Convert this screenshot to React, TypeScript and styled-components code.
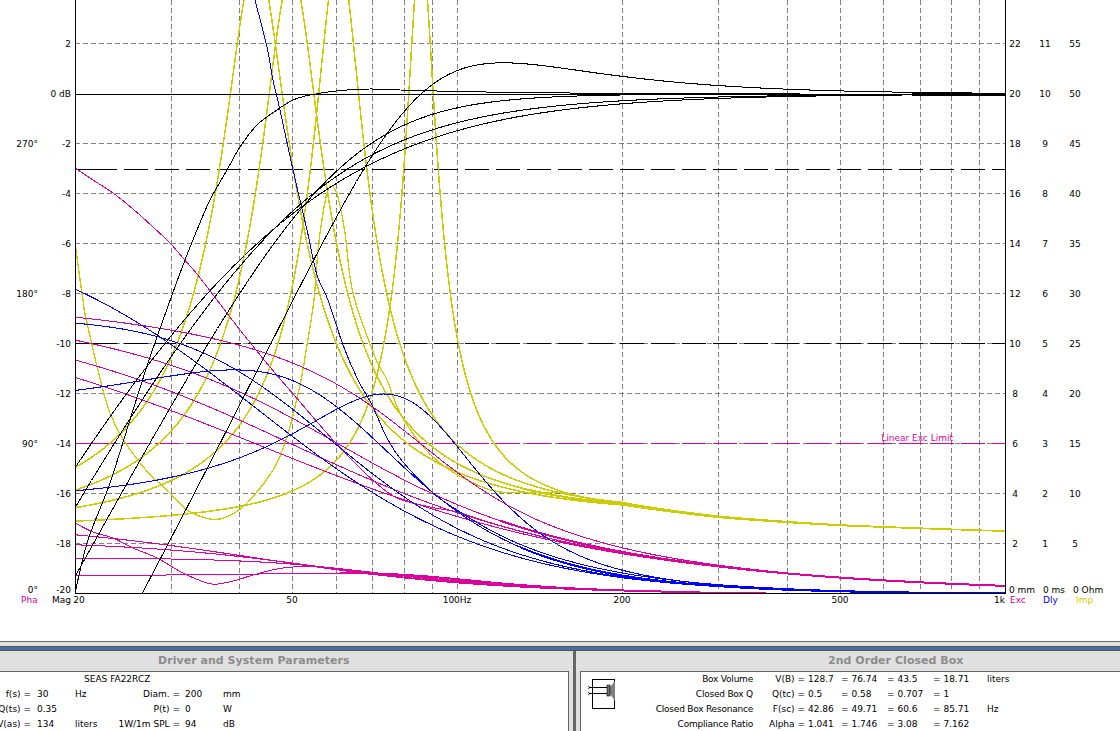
import React from "react";
import styled, { createGlobalStyle } from "styled-components";

const Global = createGlobalStyle`
  html, body { margin: 0; padding: 0; background: #fff; overflow: hidden; }
  #root { width: 1120px; height: 731px; overflow: hidden; }
`;

const MAGENTA = "#dc009c";
const YELLOW = "#cccc00";
const BLUE = "#0000ff";
const GREY = "#808080";

const Page = styled.div`
  width: 1120px;
  height: 731px;
  display: flex;
  flex-direction: column;
  overflow: hidden;
  background: #fff;
  font-family: "DejaVu Sans", Verdana, sans-serif;
  font-size: 9px;
  color: #000;
`;
const Chart = styled.svg`
  display: block;
  flex: 0 0 641px;
  width: 1120px;
  height: 641px;
`;
const Label = styled.text<{ $color?: string; $anchor?: string }>`
  font-family: "DejaVu Sans", Verdana, sans-serif;
  font-size: 9px;
  fill: ${(p) => p.$color || "#000"};
  text-anchor: ${(p) => p.$anchor || "middle"};
  dominant-baseline: central;
`;
const Curve = styled.path<{ $color: string; $w?: number }>`
  fill: none;
  stroke: ${(p) => p.$color};
  stroke-width: ${(p) => p.$w || 1};
  shape-rendering: crispEdges;
`;
const Rule = styled.line<{ $color: string; $dash?: string }>`
  stroke: ${(p) => p.$color};
  stroke-width: 1;
  stroke-dasharray: ${(p) => p.$dash || "none"};
  shape-rendering: crispEdges;
`;

const TopEdge = styled.div`
  flex: 0 0 5px;
  background: #e0e0e0;
  border-top: 1px solid #666;
  box-sizing: border-box;
`;
const BlueBar = styled.div`
  flex: 0 0 5px;
  box-sizing: border-box;
  background: #4a6ca4;
  border-top: 1px solid #555;
  border-bottom: 1px solid #555;
`;
const Panels = styled.div`
  flex: 1;
  display: flex;
  min-height: 0;
`;
const Panel = styled.section<{ $width: number }>`
  flex: 0 0 ${(p) => p.$width}px;
  width: ${(p) => p.$width}px;
  display: flex;
  flex-direction: column;
  background: #e0e0e0;
  overflow: hidden;
`;
const Divider = styled.div`
  flex: 0 0 3px;
  background: #666;
`;
const Title = styled.h2<{ $indent: number }>`
  margin: 0;
  flex: 0 0 20px;
  padding-left: ${(p) => p.$indent}px;
  font: bold 11px/20px "DejaVu Sans", Verdana, sans-serif;
  letter-spacing: 0.04px;
  color: #8c8c8c;
  white-space: nowrap;
`;
const DriverBody = styled.div`
  flex: 1;
  margin-right: 4px;
  background: #fff;
  border-top: 1px solid #666;
  border-right: 1px solid #666;
`;
const BoxBody = styled.div`
  flex: 1;
  margin-left: 4px;
  display: flex;
  background: #fff;
  border-top: 1px solid #666;
  border-left: 1px solid #666;
`;
const DriverName = styled.div`
  height: 15px;
  line-height: 14px;
  padding-left: 84px;
`;
const Grid = styled.div<{ $cols: string }>`
  display: grid;
  grid-template-columns: ${(p) => p.$cols};
  grid-auto-rows: 15px;
  line-height: 14px;
`;
const Cell = styled.div<{ $right?: boolean; $pad?: number }>`
  display: flex;
  white-space: nowrap;
  justify-content: ${(p) => (p.$right ? "flex-end" : "flex-start")};
  padding-left: ${(p) => p.$pad || 0}px;
`;
const BoxCaption = styled(Cell)`
  letter-spacing: -0.22px;
`;
const IconWrap = styled.svg`
  flex: 0 0 30px;
  width: 30px;
  height: 32px;
  margin: 6px 0 0 7px;
`;

const f2x = (f: number) => 75 + 547.4 * Math.log10(f / 20);
const x2f = (x: number) => 20 * Math.pow(10, (x - 75) / 547.4);

const BOXES = [
  { q: 0.5, fc: 42.86, R: 15.4, Qm: 3.65 },
  { q: 0.58, fc: 49.71, R: 13.7, Qm: 4.0 },
  { q: 0.707, fc: 60.6, R: 11.6, Qm: 4.9 },
  { q: 1, fc: 85.71, R: 7, Qm: 8.2 },
];
type Box = (typeof BOXES)[number];

const magY = (b: Box, f: number) => {
  const r = f / b.fc;
  const h = (r * r) / Math.hypot(1 - r * r, r / b.q);
  return 94 - 25 * 20 * Math.log10(h);
};
const phaseY = (b: Box, f: number) => {
  const r = f / b.fc;
  const p = 180 - (Math.atan2(r / b.q, 1 - r * r) * 180) / Math.PI;
  return 594 - (p * 5) / 3;
};
const delayY = (b: Box, f: number) => {
  const r = f / b.fc;
  const w0 = 2 * Math.PI * b.fc;
  const t = ((1 / (b.q * w0)) * (1 + r * r)) / ((1 - r * r) ** 2 + (r / b.q) ** 2);
  return 594 - 50 * t * 1000;
};
const excY = (b: Box, f: number) => {
  const r = f / b.fc;
  const h = 1 / Math.hypot(1 - r * r, r / b.q);
  return 594 - (25 * 5300 * h) / (b.fc * b.fc);
};
const EXTRA: [number, number][] = [
  [20, 1],
  [100, 1.5],
  [200, 1.8],
  [300, 1.2],
  [500, 0.7],
  [1000, 0.25],
];
const extra = (f: number) => {
  for (let i = 0; i < EXTRA.length - 1; i++) {
    const [a, u] = EXTRA[i];
    const [b, v] = EXTRA[i + 1];
    if (f <= b) return u + ((v - u) * Math.log(f / a)) / Math.log(b / a);
  }
  return 0.25;
};
const impY = (b: Box, f: number) => {
  const r = f / b.fc;
  const A = 1 - r * r;
  const B = r / b.Qm;
  const N = b.R * r;
  const D = A * A + B * B;
  const z = Math.hypot(6 + (N * B) / D, (N * A) / D) + extra(f);
  return 594 - 10 * z;
};

const sampled = (fn: (f: number) => number, from = 75, to = 1005, step = 0.5) => {
  const parts: string[] = [];
  for (let x = from; x <= to; x += step) {
    const y = Math.max(-200, Math.min(900, fn(x2f(x))));
    parts.push(`${parts.length ? "L" : "M"}${x.toFixed(1)} ${y.toFixed(1)}`);
  }
  return parts.join("");
};
const smooth = (p: [number, number][]) => {
  let d = `M${p[0][0]} ${p[0][1]}`;
  for (let i = 0; i < p.length - 1; i++) {
    const a = p[Math.max(0, i - 1)];
    const b = p[i];
    const c = p[i + 1];
    const e = p[Math.min(p.length - 1, i + 2)];
    d += `C${b[0] + (c[0] - a[0]) / 6} ${b[1] + (c[1] - a[1]) / 6} ${c[0] - (e[0] - b[0]) / 6} ${
      c[1] - (e[1] - b[1]) / 6
    } ${c[0]} ${c[1]}`;
  }
  return d;
};
const tail = (fn: (f: number) => number, from: number, to = 1005, step = 30) => {
  const out: [number, number][] = [];
  for (let x = from; x <= to; x += step) out.push([x, fn(x2f(x))]);
  out.push([1005, fn(1000)]);
  return out;
};

const MAG5 = smooth([
  [75, 593], [88, 540], [110, 483], [133, 410], [147, 366], [157, 337], [172, 295], [185, 260],
  [197, 230], [210, 200], [227, 170], [240, 147], [257, 125], [277, 110], [293, 100], [310, 95],
  [340, 90.5], [370, 89], [400, 90], [457, 91.5], [520, 92.5], [620, 93.5], [800, 94], [1005, 94],
]);
const PHA5 = smooth([
  [75, 168], [93, 180], [113, 193], [133, 209], [153, 227], [170, 243], [183, 258], [197, 274],
  [217, 300], [240, 330], [270, 367], [300, 402], [333, 440], [365, 473], [395, 497], [430, 507],
  ...tail((f) => 594 - ((85.7 * 57.3) / f) * (5 / 3), 457),
]);
const DLY5 = smooth([
  [250, -20], [255, 0], [267, 47], [273, 80], [280, 110], [293, 170], [307, 230], [317, 275],
  [328, 300], [343, 345], [358, 380], [372, 405], [388, 440], [403, 462], [433, 493], [457, 510],
  ...tail((f) => 594 - (16800 / (f * f)) * 50, 490),
]);
const EXC5 = smooth([
  [75, 523], [93, 532], [113, 538], [133, 548], [157, 558], [183, 573], [207, 583], [218, 584],
  [237, 580], [253, 575], [277, 569], [293, 567], [320, 567], [372, 573],
  ...tail((f) => 594 - (25 * 5300) / (f * f), 457),
]);
const IMP5 = smooth([
  [75, 242], [78, 265], [83, 300], [87, 323], [110, 413], [140, 463], [170, 493], [187, 510],
  [210, 519], [227, 517], [247, 503], [273, 470], [287, 437], [300, 385], [307, 345], [314, 300],
  [318, 250], [323, 213], [328, 190], [333, 187], [338, 197], [345, 233], [353, 293], [375, 357],
  [387, 380], [400, 413], [420, 443], [440, 463], [467, 480], [500, 492],
  ...tail((f) => impY(BOXES[2], f), 560),
]);

const V_GRID = [30, 40, 50, 60, 70, 80, 90, 100, 200, 300, 400, 500, 600, 700, 800, 900].map(f2x);
const H_GRID = [44, 144, 194, 244, 294, 344, 394, 444, 494, 544];
const LEFT = [
  [44, "2"], [94, "0 dB"], [144, "-2"], [194, "-4"], [244, "-6"], [294, "-8"], [344, "-10"],
  [394, "-12"], [444, "-14"], [494, "-16"], [544, "-18"], [590, "-20"],
] as [number, string][];
const PHASE = [[144, "270°"], [294, "180°"], [444, "90°"], [590, "0°"]] as [number, string][];
const RIGHT = [
  [44, "22", "11", "55"], [94, "20", "10", "50"], [144, "18", "9", "45"], [194, "16", "8", "40"],
  [244, "14", "7", "35"], [294, "12", "6", "30"], [344, "10", "5", "25"], [394, "8", "4", "20"],
  [444, "6", "3", "15"], [494, "4", "2", "10"], [544, "2", "1", "5"],
] as [number, string, string, string][];
const X_LABELS = [[79, "20"], [292, "50"], [457, "100Hz"], [622, "200"], [840, "500"]] as [number, string][];

const LimitLine = ({ y, color }: { y: number; color: string }) => (
  <>
    <Rule x1={75} x2={117} y1={y} y2={y} $color={color} />
    <Rule x1={124} x2={1005} y1={y} y2={y} $color={color} $dash="24 7" />
  </>
);

const PlotChart = () => (
  <Chart viewBox="0 0 1120 641" xmlns="http://www.w3.org/2000/svg">
    <defs>
      <clipPath id="plot">
        <rect x={75} y={0} width={930} height={594} />
      </clipPath>
    </defs>
    {V_GRID.map((x) => (
      <Rule key={x} x1={x} x2={x} y1={0} y2={594} $color={GREY} $dash="5 3" />
    ))}
    {H_GRID.map((y) => (
      <Rule key={y} x1={75} x2={1005} y1={y - 0.5} y2={y - 0.5} $color={GREY} $dash="5 3" />
    ))}
    <g clipPath="url(#plot)">
      <LimitLine y={169} color="#000" />
      <LimitLine y={343.5} color="#000" />
      <LimitLine y={443.5} color={MAGENTA} />
      {BOXES.map((b) => (
        <Curve key={`i${b.fc}`} d={sampled((f) => impY(b, f), 75, 1005, 0.25)} $color={YELLOW} $w={1.5} />
      ))}
      <Curve d={IMP5} $color={YELLOW} $w={1.3} />
      <Curve d={sampled((f) => impY(BOXES[1], f), 520, 800)} $color={YELLOW} $w={2} />
      {BOXES.map((b) => (
        <Curve key={`e${b.fc}`} d={sampled((f) => excY(b, f))} $color={MAGENTA} />
      ))}
      <Curve d={EXC5} $color={MAGENTA} />
      <Curve d={sampled((f) => excY(BOXES[3], f), 340, 700)} $color={MAGENTA} $w={2} />
      {BOXES.map((b) => (
        <Curve key={`p${b.fc}`} d={sampled((f) => phaseY(b, f))} $color={MAGENTA} />
      ))}
      <Curve d={PHA5} $color={MAGENTA} />
      <Curve d={sampled((f) => phaseY(BOXES[2], f), 500, 1005)} $color={MAGENTA} $w={2} />
      {BOXES.map((b) => (
        <Curve key={`d${b.fc}`} d={sampled((f) => delayY(b, f))} $color={BLUE} />
      ))}
      <Curve d={DLY5} $color={BLUE} />
      <Curve d={sampled((f) => delayY(BOXES[2], f), 520, 1005)} $color={BLUE} $w={2} />
      {BOXES.map((b) => (
        <Curve key={`m${b.fc}`} d={sampled((f) => magY(b, f))} $color="#000" />
      ))}
      <Curve d={MAG5} $color="#000" />
    </g>
    <Rule x1={75} x2={1005} y1={94} y2={94} $color="#000" />
    <Curve d="M912 94H1005" $color="#000" $w={3} />
    <Rule x1={75} x2={75} y1={0} y2={594} $color="#000" />
    <Rule x1={1005} x2={1005} y1={0} y2={594} $color="#000" />
    <Rule x1={75} x2={1005} y1={593.5} y2={593.5} $color="#000" />

    {LEFT.map(([y, t]) => (
      <Label key={t} x={71} y={y} $anchor="end">{t}</Label>
    ))}
    {PHASE.map(([y, t]) => (
      <Label key={t} x={38} y={y} $anchor="end">{t}</Label>
    ))}
    {RIGHT.map(([y, a, b, c]) => (
      <React.Fragment key={y}>
        <Label x={1015} y={y}>{a}</Label>
        <Label x={1045} y={y}>{b}</Label>
        <Label x={1075} y={y}>{c}</Label>
      </React.Fragment>
    ))}
    {X_LABELS.map(([x, t]) => (
      <Label key={t} x={x} y={600}>{t}</Label>
    ))}
    <Label x={1005} y={600} $anchor="end">1k</Label>
    <Label x={21} y={600} $anchor="start" $color={MAGENTA}>Pha</Label>
    <Label x={71} y={600} $anchor="end">Mag</Label>
    <Label x={1010} y={600} $anchor="start" $color={MAGENTA}>Exc</Label>
    <Label x={1043} y={600} $anchor="start" $color={BLUE}>Dly</Label>
    <Label x={1076} y={600} $anchor="start" $color={YELLOW}>Imp</Label>
    <Label x={1009} y={590} $anchor="start">0 mm</Label>
    <Label x={1043} y={590} $anchor="start">0 ms</Label>
    <Label x={1073} y={590} $anchor="start">0 Ohm</Label>
    <Label x={953} y={438} $anchor="end" $color={MAGENTA}>Linear Exc Limit</Label>
  </Chart>
);

const SpeakerIcon = () => (
  <IconWrap viewBox="0 0 30 32">
    <rect x={4.5} y={1.5} width={22} height={29} fill="#fff" stroke="#000" />
    <path d="M22 9 L27 3 L27 23 L22 16 Z" fill="#808080" />
    <rect x={19} y={7} width={3} height={11} fill="#707070" stroke="#000" strokeWidth={0.6} />
    <path d="M1 9.5H19M1 15.5H19" stroke="#000" fill="none" shapeRendering="crispEdges" />
    <path d="M0 8L2 9.5L0 11M0 14L2 15.5L0 17" stroke="#000" fill="none" strokeWidth={0.7} />
  </IconWrap>
);

const DRIVER_ROWS = [
  ["f(s) =", "30", "Hz", "Diam. =", "200", "mm"],
  ["Q(ts) =", "0.35", "", "P(t) =", "0", "W"],
  ["V(as) =", "134", "liters", "1W/1m SPL =", "94", "dB"],
];
const BOX_ROWS = [
  ["Box Volume", "V(B) =", "128.7", "= 76.74", "= 43.5", "= 18.71", "liters"],
  ["Closed Box Q", "Q(tc) =", "0.5", "= 0.58", "= 0.707", "= 1", ""],
  ["Closed Box Resonance", "F(sc) =", "42.86", "= 49.71", "= 60.6", "= 85.71", "Hz"],
  ["Compliance Ratio", "Alpha =", "1.041", "= 1.746", "= 3.08", "= 7.162", ""],
];

export default function App() {
  return (
    <Page>
      <Global />
      <PlotChart />
      <TopEdge />
      <BlueBar />
      <Panels>
        <Panel $width={573}>
          <Title $indent={158}>Driver and System Parameters</Title>
          <DriverBody>
            <DriverName>SEAS FA22RCZ</DriverName>
            <Grid $cols="31px 44px 30px 75px 43px auto">
              {DRIVER_ROWS.map((row) =>
                row.map((t, i) => (
                  <Cell
                    key={`${row[0]}${i}`}
                    $right={i === 0 || i === 3}
                    $pad={i === 1 ? 6 : i === 4 ? 5 : 0}
                  >
                    {t}
                  </Cell>
                ))
              )}
            </Grid>
          </DriverBody>
        </Panel>
        <Divider />
        <Panel $width={544}>
          <Title $indent={252}>2nd Order Closed Box</Title>
          <BoxBody>
            <SpeakerIcon />
            <Grid $cols="135px 52px 36px 46px 46px 54px auto">
              {BOX_ROWS.map((row) =>
                row.map((t, i) =>
                  i === 0 ? (
                    <BoxCaption key={`${row[0]}${i}`} $right>
                      {t}
                    </BoxCaption>
                  ) : (
                    <Cell key={`${row[0]}${i}`} $right={i === 1} $pad={i === 2 ? 3 : 0}>
                      {t}
                    </Cell>
                  )
                )
              )}
            </Grid>
          </BoxBody>
        </Panel>
      </Panels>
    </Page>
  );
}
